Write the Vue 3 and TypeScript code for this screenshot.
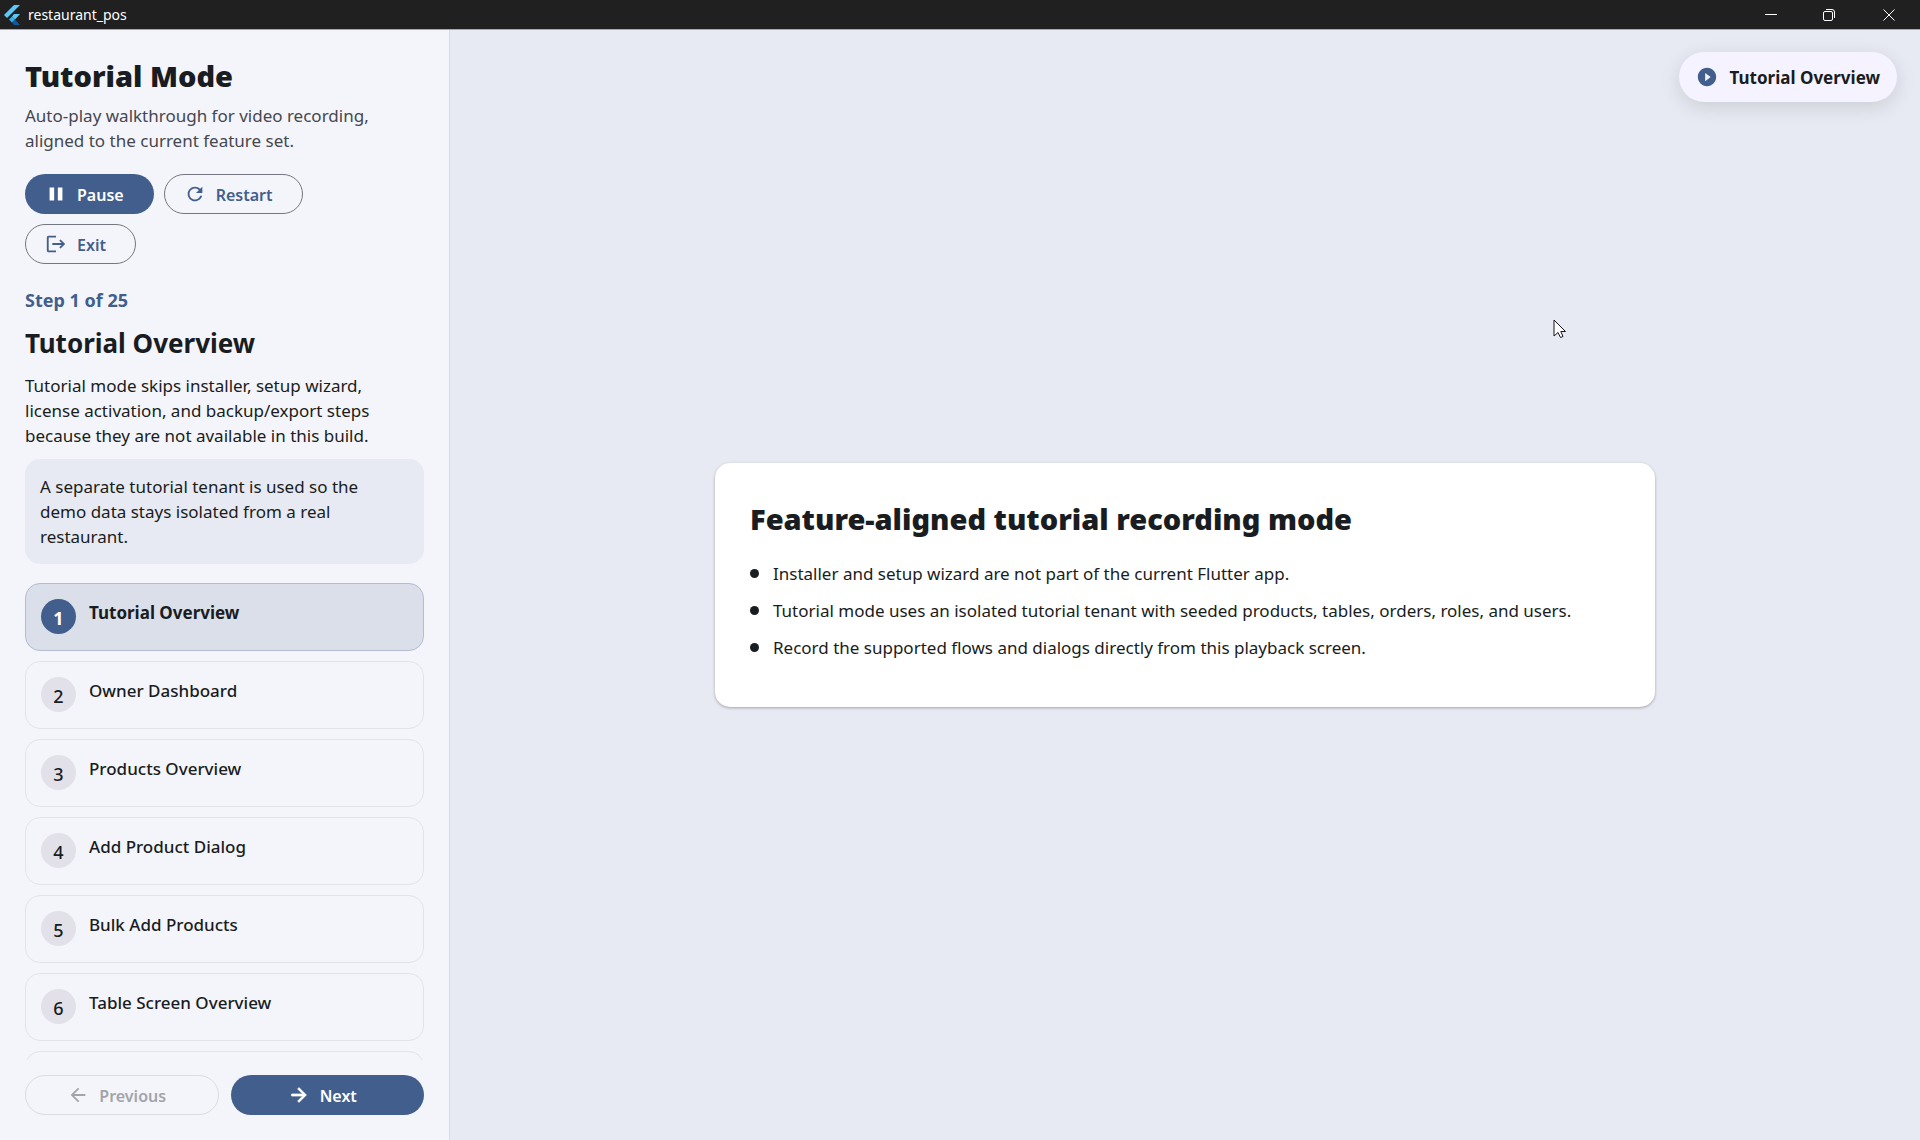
<script setup lang="ts">
import { computed, ref } from 'vue'

interface Step {
  id: number
  title: string
}

const totalSteps = 25
const current = ref(1)
const steps: Step[] = [
  { id: 1, title: 'Tutorial Overview' },
  { id: 2, title: 'Owner Dashboard' },
  { id: 3, title: 'Products Overview' },
  { id: 4, title: 'Add Product Dialog' },
  { id: 5, title: 'Bulk Add Products' },
  { id: 6, title: 'Table Screen Overview' },
]

const points: string[] = [
  'Installer and setup wizard are not part of the current Flutter app.',
  'Tutorial mode uses an isolated tutorial tenant with seeded products, tables, orders, roles, and users.',
  'Record the supported flows and dialogs directly from this playback screen.',
]

const currentTitle = computed(() => steps[current.value - 1].title)

function go(delta: number): void {
  current.value = Math.min(steps.length, Math.max(1, current.value + delta))
}
</script>

<template>
  <div class="window">
    <header class="titlebar">
      <svg class="logo" viewBox="0 0 16 20" aria-hidden="true">
        <path d="M10 0h6L3 13 0 10z" fill="#5cc8f8" />
        <path d="M10 9h6l-5 5.500-3-3z" fill="#5cc8f8" />
        <path d="M5 14.500l3-3 3 3-3 3z" fill="#39b0ea" />
        <path d="M8 17.500l3-3 5 5.500h-6z" fill="#0f5a9c" />
      </svg>
      <span class="app-name">restaurant_pos</span>
      <div class="window-controls">
        <button type="button" aria-label="Minimize">
          <svg viewBox="0 0 14 14"><path d="M1 6.500h12" /></svg>
        </button>
        <button type="button" aria-label="Restore">
          <svg viewBox="0 0 14 14">
            <rect x="1.500" y="3.500" width="9" height="9" rx="1.500" />
            <path d="M4 1.500h6a2.500 2.500 0 0 1 2.500 2.500v6" />
          </svg>
        </button>
        <button type="button" aria-label="Close">
          <svg viewBox="0 0 14 14"><path d="M1.500 1.500l11 11M12.500 1.500l-11 11" /></svg>
        </button>
      </div>
    </header>

    <div class="body">
      <aside class="sidebar">
        <h1>Tutorial Mode</h1>
        <p class="intro">Auto-play walkthrough for video recording, aligned to the current feature set.</p>

        <div class="actions">
          <button type="button" class="btn filled">
            <svg class="icon" viewBox="0 0 24 24"><path d="M5 19h5V5H5zM14 5v14h5V5z" /></svg>
            <span>Pause</span>
          </button>
          <button type="button" class="btn outlined" @click="current = 1">
            <svg class="icon" viewBox="0 0 24 24">
              <path d="M17.650 6.350C16.200 4.900 14.210 4 12 4c-4.420 0-7.990 3.580-7.990 8s3.570 8 7.990 8c3.730 0 6.840-2.550 7.730-6h-2.080c-.82 2.330-3.040 4-5.650 4-3.310 0-6-2.690-6-6s2.690-6 6-6c1.660 0 3.140.69 4.220 1.780L13 11h7V4l-2.350 2.350z" />
            </svg>
            <span>Restart</span>
          </button>
          <button type="button" class="btn outlined">
            <svg class="icon" viewBox="0 0 24 24">
              <path d="M17 7l-1.410 1.410L18.170 11H8v2h10.170l-2.580 2.580L17 17l5-5zM4 5h8V3H4c-1.100 0-2 .9-2 2v14c0 1.100.9 2 2 2h8v-2H4V5z" />
            </svg>
            <span>Exit</span>
          </button>
        </div>

        <p class="progress">Step {{ current }} of {{ totalSteps }}</p>
        <h2>{{ currentTitle }}</h2>
        <p class="description">
          Tutorial mode skips installer, setup wizard, license activation, and backup/export steps because they are not
          available in this build.
        </p>
        <p class="note">A separate tutorial tenant is used so the demo data stays isolated from a real restaurant.</p>

        <ol class="steps">
          <li v-for="step in steps" :key="step.id">
            <button type="button" class="step" :class="{ active: step.id === current }" @click="current = step.id">
              <span class="badge">{{ step.id }}</span>
              <span class="step-title">{{ step.title }}</span>
            </button>
          </li>
          <li class="step" aria-hidden="true"></li>
        </ol>

        <nav class="pager">
          <button type="button" class="btn outlined" :disabled="current === 1" @click="go(-1)">
            <svg class="icon" viewBox="0 0 24 24">
              <path d="M20 11H7.830l5.590-5.590L12 4l-8 8 8 8 1.410-1.410L7.830 13H20v-2z" />
            </svg>
            <span>Previous</span>
          </button>
          <button type="button" class="btn filled" @click="go(1)">
            <svg class="icon bold" viewBox="0 0 24 24">
              <path d="M12 4l-1.410 1.410L16.170 11H4v2h12.170l-5.580 5.590L12 20l8-8z" />
            </svg>
            <span>Next</span>
          </button>
        </nav>
      </aside>

      <main class="stage">
        <div class="chip">
          <svg class="icon" viewBox="0 0 24 24">
            <path d="M12 2C6.480 2 2 6.480 2 12s4.480 10 10 10 10-4.480 10-10S17.520 2 12 2zm-2 14.500v-9l6 4.500-6 4.500z" />
          </svg>
          <span>{{ currentTitle }}</span>
        </div>

        <section class="card">
          <h2>Feature-aligned tutorial recording mode</h2>
          <ul>
            <li v-for="point in points" :key="point">{{ point }}</li>
          </ul>
        </section>

        <svg class="cursor" viewBox="0 0 14 20" aria-hidden="true">
          <path d="M1 1v16l4-3.500 2.500 5 2.500-1-2.200-5H12.500z" fill="#fff" stroke="#15151c" stroke-width="1" stroke-linejoin="round" />
        </svg>
      </main>
    </div>
  </div>
</template>

<style>
body {
  margin: 0;
}
</style>

<style scoped>
.window {
  display: flex;
  flex-direction: column;
  height: 100vh;
  overflow: hidden;
  box-sizing: border-box;
  font-family: 'Noto Sans', 'Open Sans', sans-serif;
  font-size: 17px;
  line-height: 25px;
  color: #191c20;
}

.window *,
.window *::before {
  box-sizing: border-box;
}

h1,
h2,
p,
ol,
ul {
  margin: 0;
  padding: 0;
}

ol,
ul {
  list-style: none;
}

button {
  font: inherit;
  color: inherit;
  border: 0;
  background: none;
  padding: 0;
  cursor: pointer;
}

.icon {
  width: 22px;
  height: 22px;
  flex: none;
  fill: currentColor;
}

.icon.bold {
  stroke: currentColor;
  stroke-width: 1px;
}

.titlebar {
  display: flex;
  align-items: center;
  flex: none;
  height: 30px;
  padding-left: 4px;
  background: #202020;
  border-bottom: 1px solid #aaa6ab;
  color: #fff;
}

.logo {
  width: 16px;
  height: 20px;
}

.app-name {
  margin-left: 8px;
  font-size: 14px;
}

.window-controls {
  display: flex;
  margin-left: auto;
}

.window-controls button {
  display: grid;
  place-items: center;
  width: 58px;
  height: 29px;
}

.window-controls button:last-child {
  width: 62px;
}

.window-controls svg {
  width: 14px;
  height: 14px;
  fill: none;
  stroke: #fff;
}

.body {
  display: flex;
  flex: 1;
  min-height: 0;
}

.sidebar {
  display: flex;
  flex-direction: column;
  flex: none;
  width: 450px;
  padding: 25px;
  background: #f4f5fb;
  border-right: 1px solid #d8dce8;
}

h1,
.card h2 {
  font-size: 29px;
  line-height: 42px;
  font-weight: 900;
}

.intro {
  margin-top: 6px;
  color: #44474e;
}

.intro,
.actions,
.description {
  padding-right: 25px;
}

.actions {
  display: flex;
  flex-wrap: wrap;
  gap: 10px;
  margin-top: 21px;
}

.btn {
  display: flex;
  align-items: center;
  gap: 10px;
  height: 40px;
  padding: 0 30px 0 20px;
  border-radius: 20px;
  font-size: 16px;
  font-weight: 600;
}

.btn span {
  padding-top: 2px;
}

.filled {
  background: #425e8d;
  color: #fff;
}

.outlined {
  border: 1px solid #74777f;
  padding: 0 29px 0 19px;
  color: #425e8d;
}

.outlined:disabled {
  border-color: #dadce2;
  color: #a2a4aa;
  cursor: default;
}

.progress {
  margin-top: 24px;
  font-size: 18px;
  font-weight: 700;
  color: #425e8d;
}

.sidebar h2 {
  margin-top: 10px;
  font-size: 26px;
  line-height: 40px;
  font-weight: 700;
}

.description {
  margin-top: 10px;
}

.note {
  margin-top: 11px;
  padding: 15px 25px 15px 15px;
  border-radius: 15px;
  background: #e7eaf2;
}

.steps {
  display: flex;
  flex-direction: column;
  gap: 10px;
  flex: 1;
  min-height: 0;
  margin-top: 19px;
  overflow: hidden;
}

.step {
  display: flex;
  align-items: flex-start;
  gap: 13px;
  flex: none;
  width: 100%;
  height: 68px;
  padding: 15px;
  border: 1px solid #e2e3e9;
  border-radius: 15px;
  text-align: left;
  font-weight: 500;
}

.step-title {
  padding-top: 1px;
}

.badge {
  display: grid;
  place-items: center;
  width: 35px;
  height: 35px;
  padding-top: 4px;
  border-radius: 50%;
  background: #e2e1e9;
  font-size: 18px;
}

.step.active {
  background: #dbdfea;
  border-color: #b3bcd3;
  font-weight: 700;
}

.active .badge {
  background: #425e8d;
  color: #fff;
}

.pager {
  display: grid;
  grid-template-columns: 1fr 1fr;
  gap: 12px;
  margin-top: 15px;
}

.pager .btn {
  justify-content: center;
}

.stage {
  position: relative;
  display: flex;
  align-items: center;
  justify-content: center;
  flex: 1;
  min-width: 0;
  padding: 20px;
  background: #e7eaf2;
}

.chip {
  position: absolute;
  top: 22px;
  right: 23px;
  display: flex;
  align-items: center;
  gap: 12px;
  height: 50px;
  padding: 0 17px;
  border-radius: 25px;
  background: #f5f3ff;
  box-shadow: 0 5px 20px rgba(0, 0, 0, 0.12);
  font-weight: 700;
}

.chip .icon {
  color: #425e8d;
}

.card {
  width: 100%;
  max-width: 940px;
  padding: 35px;
  border-radius: 15px;
  background: #fff;
  box-shadow: 0 1px 3px rgba(0, 0, 0, 0.3);
}

.card ul {
  margin-top: 21px;
}

.card li {
  display: flex;
  align-items: center;
  gap: 14px;
  padding-bottom: 12px;
}

.card li::before {
  content: '';
  width: 9px;
  height: 9px;
  border-radius: 50%;
  background: #191c20;
}

.cursor {
  position: absolute;
  top: 26%;
  left: 75%;
  width: 14px;
  height: 20px;
}
</style>
